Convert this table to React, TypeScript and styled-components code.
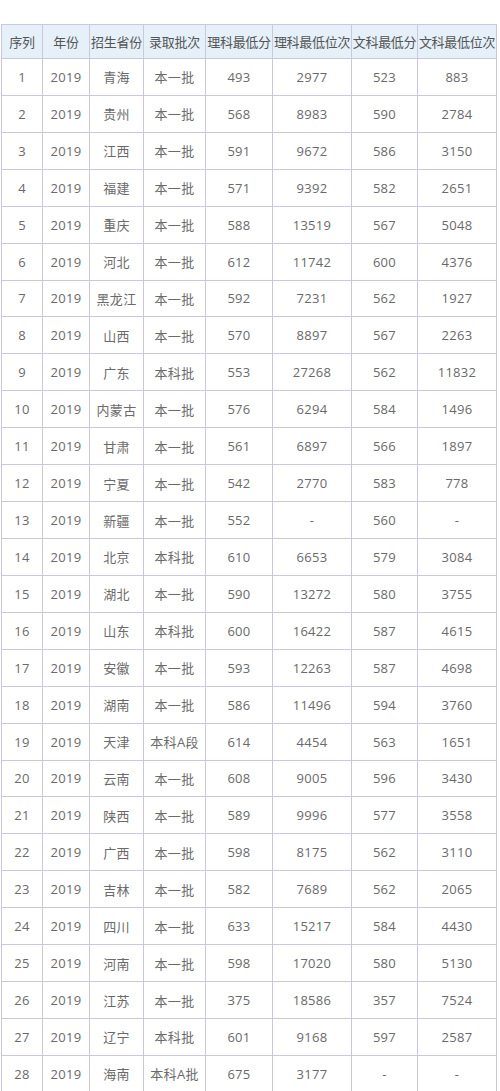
import { createGlobalStyle, styled } from "styled-components";

type Row = [string, string, string, string, string, string];

const rows: Row[] = [
	["青海", "本一批", "493", "2977", "523", "883"],
	["贵州", "本一批", "568", "8983", "590", "2784"],
	["江西", "本一批", "591", "9672", "586", "3150"],
	["福建", "本一批", "571", "9392", "582", "2651"],
	["重庆", "本一批", "588", "13519", "567", "5048"],
	["河北", "本一批", "612", "11742", "600", "4376"],
	["黑龙江", "本一批", "592", "7231", "562", "1927"],
	["山西", "本一批", "570", "8897", "567", "2263"],
	["广东", "本科批", "553", "27268", "562", "11832"],
	["内蒙古", "本一批", "576", "6294", "584", "1496"],
	["甘肃", "本一批", "561", "6897", "566", "1897"],
	["宁夏", "本一批", "542", "2770", "583", "778"],
	["新疆", "本一批", "552", "-", "560", "-"],
	["北京", "本科批", "610", "6653", "579", "3084"],
	["湖北", "本一批", "590", "13272", "580", "3755"],
	["山东", "本科批", "600", "16422", "587", "4615"],
	["安徽", "本一批", "593", "12263", "587", "4698"],
	["湖南", "本一批", "586", "11496", "594", "3760"],
	["天津", "本科A段", "614", "4454", "563", "1651"],
	["云南", "本一批", "608", "9005", "596", "3430"],
	["陕西", "本一批", "589", "9996", "577", "3558"],
	["广西", "本一批", "598", "8175", "562", "3110"],
	["吉林", "本一批", "582", "7689", "562", "2065"],
	["四川", "本一批", "633", "15217", "584", "4430"],
	["河南", "本一批", "598", "17020", "580", "5130"],
	["江苏", "本一批", "375", "18586", "357", "7524"],
	["辽宁", "本科批", "601", "9168", "597", "2587"],
	["海南", "本科A批", "675", "3177", "-", "-"],
];

const headers = [
	"序列",
	"年份",
	"招生省份",
	"录取批次",
	"理科最低分",
	"理科最低位次",
	"文科最低分",
	"文科最低位次",
];

const GlobalStyle = createGlobalStyle`
	body {
		margin: 0;
		padding: 24px 0 0 1px;
		background: #fff;
		font-family: "Open Sans", "Noto Sans CJK SC", sans-serif;
	}
`;

const Table = styled.div`
	display: grid;
	grid-template-columns: 41px 47px 54px 62px 67px 79px 66px 79px;
	width: max-content;
	border-left: 1px solid #cbc7de;
	border-top: 1px solid #cbc7de;
`;

const Cell = styled.div<{ $head?: boolean }>`
	display: flex;
	align-items: center;
	justify-content: center;
	height: ${(p) => (p.$head ? "33px" : "35.93px")};
	border-right: 1px solid #cbc7de;
	border-bottom: 1px solid #cbc7de;
	background: ${(p) => (p.$head ? "#e5f0f9" : "#fff")};
	color: ${(p) => (p.$head ? "#555" : "#6a6a6a")};
	font-size: 13px;
	white-space: nowrap;
	letter-spacing: ${(p) => (p.$head ? "-0.3px" : "0.3px")};
`;

export default function App() {
	return (
		<>
			<GlobalStyle />
			<Table>
				{headers.map((h) => (
					<Cell $head key={h}>
						{h}
					</Cell>
				))}
				{rows.map((r, i) => [
					<Cell key={`${i}-n`}>{i + 1}</Cell>,
					<Cell key={`${i}-y`}>2019</Cell>,
					...r.map((v, j) => <Cell key={`${i}-${j}`}>{v}</Cell>),
				])}
			</Table>
		</>
	);
}
